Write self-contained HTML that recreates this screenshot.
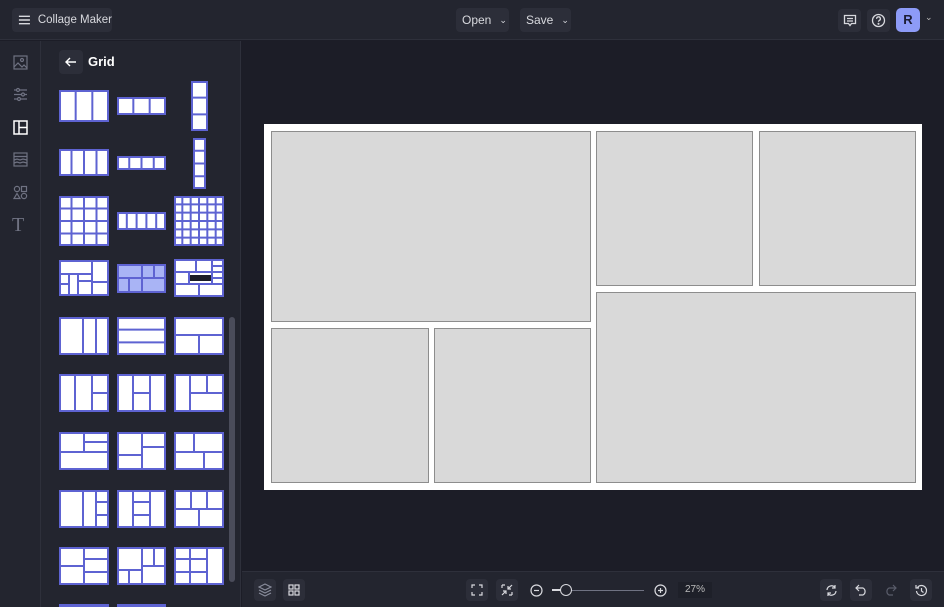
<!DOCTYPE html>
<html><head><meta charset="utf-8"><style>
*{margin:0;padding:0;box-sizing:border-box}
html,body{width:944px;height:607px;overflow:hidden}
body{background:#1c1d27;font-family:"Liberation Sans",sans-serif;position:relative}
.top{position:absolute;left:0;top:0;width:944px;height:40px;background:#23252f;border-bottom:1px solid #2e303b}
.btn{position:absolute;background:#2c2e39;border-radius:4px;color:#d8d9de;font-size:12px;display:flex;align-items:center;white-space:nowrap}
.rail{position:absolute;left:0;top:41px;width:41px;height:566px;background:#23252f;border-right:1px solid #2e303b}
.panel{position:absolute;left:41px;top:41px;width:200px;height:566px;background:#23252f;border-right:1px solid #2e303b;overflow:hidden}
.bottom{position:absolute;left:242px;top:571px;width:702px;height:36px;background:#23252f;border-top:1px solid #2e303b}
.t{position:absolute}
.t svg{display:block}
.ib{position:absolute;width:22px;height:22px;background:#2c2e39;border-radius:4px;display:flex;align-items:center;justify-content:center}
.cell{position:absolute;background:#d9d9d9;border:1px solid #8d8d8d}
#thumbs{position:absolute;left:0;top:0;width:944px;height:607px;overflow:hidden}
</style></head><body>
<div class="top">
 <div class="btn" style="left:12px;top:8px;width:100px;height:24px;padding-left:6px">
  <svg width="14" height="12" viewBox="0 0 14 12"><path d="M1 2h12M1 6h12M1 10h12" stroke="#d8d9de" stroke-width="1.5"/></svg>
  <span style="margin-left:7px;font-size:11.5px">Collage Maker</span></div>
 <div class="btn" style="left:456px;top:8px;width:53px;height:24px;padding-left:6px">Open <span style="margin-left:8px;font-size:9px">&#8964;</span></div>
 <div class="btn" style="left:520px;top:8px;width:51px;height:24px;padding-left:6px">Save <span style="margin-left:8px;font-size:9px">&#8964;</span></div>
 <div class="ib" style="left:838px;top:9px;width:23px;height:23px"><svg width="14" height="14" viewBox="0 0 14 14" fill="none" stroke="#d8d9de" stroke-width="1.3"><path d="M1.5 1.5h11v8h-4l-1.5 2-1.5-2h-4z"/><path d="M4 4.5h6M4 7h6"/></svg></div>
 <div class="ib" style="left:867px;top:9px;width:23px;height:23px"><svg width="15" height="15" viewBox="0 0 15 15" fill="none" stroke="#d8d9de" stroke-width="1.3"><circle cx="7.5" cy="7.5" r="6"/><path d="M5.6 5.8a1.9 1.9 0 1 1 2.6 1.7c-.5.3-.7.6-.7 1.2"/><circle cx="7.5" cy="10.8" r=".4" fill="#d8d9de"/></svg></div>
 <div style="position:absolute;left:896px;top:8px;width:24px;height:24px;background:#8d9bf7;border-radius:5px;color:#1c1d35;font-weight:bold;font-size:13px;text-align:center;line-height:24px">R</div>
 <div style="position:absolute;left:925px;top:12px;color:#bbb;font-size:9px">&#8964;</div>
</div>
<div class="rail">
 <svg style="position:absolute;left:13px;top:14px" width="15" height="15" viewBox="0 0 15 15" fill="none" stroke="#6f7282" stroke-width="1.2"><rect x="1" y="1" width="13" height="13"/><circle cx="9" cy="5" r="1.5"/><path d="M1 12l4-4 4 4 2-2 3 3"/></svg>
 <svg style="position:absolute;left:13px;top:46px" width="15" height="15" viewBox="0 0 15 15" fill="none" stroke="#6f7282" stroke-width="1.2"><path d="M1 3h13M1 7.5h13M1 12h13"/><circle cx="5" cy="3" r="1.5" fill="#23252f"/><circle cx="10" cy="7.5" r="1.5" fill="#23252f"/><circle cx="6" cy="12" r="1.5" fill="#23252f"/></svg>
 <svg style="position:absolute;left:13px;top:79px" width="15" height="15" viewBox="0 0 15 15" fill="none" stroke="#ffffff" stroke-width="1.5"><rect x="1" y="1" width="13" height="13"/><path d="M6 1v13M6 7.5h8"/></svg>
 <svg style="position:absolute;left:13px;top:111px" width="15" height="15" viewBox="0 0 15 15" fill="none" stroke="#6f7282" stroke-width="1.2"><rect x="1" y="1" width="13" height="13"/><path d="M1 4.5h13M1 8l3-1 3 1 3-1 4 1M1 11l3-1 3 1 3-1 4 1"/></svg>
 <svg style="position:absolute;left:13px;top:144px" width="15" height="15" viewBox="0 0 15 15" fill="none" stroke="#6f7282" stroke-width="1.2"><circle cx="4" cy="4" r="2.6"/><rect x="8.5" y="1.5" width="5" height="5"/><path d="M4 8.5l3 5H1z"/><circle cx="11" cy="11" r="2.6"/></svg>
 <div style="position:absolute;left:12px;top:173px;color:#6f7282;font-family:'Liberation Serif',serif;font-size:20px">T</div>
</div>
<div class="panel">
 <div class="ib" style="left:18px;top:9px;width:24px;height:24px"><svg width="12" height="10" viewBox="0 0 12 10" fill="none" stroke="#fff" stroke-width="1.4"><path d="M11 5H1.5M5 1L1 5l4 4"/></svg></div>
 <div style="position:absolute;left:47px;top:13px;color:#fff;font-weight:bold;font-size:13px">Grid</div>
 <div style="position:absolute;left:188px;top:276px;width:6px;height:265px;background:#4a4c5a;border-radius:3px"></div>
</div>
<div id="thumbs"></div>
<div class="bottom">
 <div class="ib" style="left:12px;top:7px"><svg width="14" height="14" viewBox="0 0 14 14" fill="none" stroke="#8a8d9c" stroke-width="1.1"><path d="M7 1l6 3-6 3-6-3z M1 7l6 3 6-3M1 10l6 3 6-3"/></svg></div>
 <div class="ib" style="left:41px;top:7px"><svg width="12" height="12" viewBox="0 0 12 12" fill="none" stroke="#d8d9de" stroke-width="1.2"><rect x="1" y="1" width="4" height="4"/><rect x="7" y="1" width="4" height="4"/><rect x="1" y="7" width="4" height="4"/><rect x="7" y="7" width="4" height="4"/></svg></div>
 <div class="ib" style="left:224px;top:7px"><svg width="12" height="12" viewBox="0 0 12 12" fill="none" stroke="#d8d9de" stroke-width="1.2"><path d="M1 4V1h3M8 1h3v3M11 8v3H8M4 11H1V8"/></svg></div>
 <div class="ib" style="left:254px;top:7px"><svg width="12" height="12" viewBox="0 0 12 12" fill="none" stroke="#d8d9de" stroke-width="1.2"><path d="M1 1h3M1 1v3M11 1L7 5M7 2v3h3M11 11H8M11 11V8M1 11l4-4M5 10V7H2"/></svg></div>
 <svg style="position:absolute;left:288px;top:12px" width="13" height="13" viewBox="0 0 13 13" fill="none" stroke="#d8d9de" stroke-width="1.2"><circle cx="6.5" cy="6.5" r="5.5"/><path d="M4 6.5h5"/></svg>
 <div style="position:absolute;left:310px;top:18px;width:92px;height:1px;background:#6f7282"></div>
 <div style="position:absolute;left:310px;top:17px;width:15px;height:2px;background:#d8d9de"></div>
 <div style="position:absolute;left:318px;top:12px;width:12px;height:12px;border:1.5px solid #d8d9de;border-radius:50%;background:#23252f"></div>
 <svg style="position:absolute;left:412px;top:12px" width="13" height="13" viewBox="0 0 13 13" fill="none" stroke="#d8d9de" stroke-width="1.2"><circle cx="6.5" cy="6.5" r="5.5"/><path d="M4 6.5h5M6.5 4v5"/></svg>
 <div style="position:absolute;left:436px;top:10px;width:34px;height:16px;background:#1e2029;color:#bbb;font-size:10px;text-align:center;line-height:16px">27%</div>
 <div class="ib" style="left:578px;top:7px"><svg width="13" height="13" viewBox="0 0 13 13" fill="none" stroke="#d8d9de" stroke-width="1.2"><path d="M2 6a4.5 4.5 0 0 1 8-2.5M11 7a4.5 4.5 0 0 1-8 2.5M10 1v3H7M3 12V9h3"/></svg></div>
 <div class="ib" style="left:608px;top:7px"><svg width="13" height="12" viewBox="0 0 13 12" fill="none" stroke="#d8d9de" stroke-width="1.2"><path d="M4 1L1 4l3 3M1 4h7a4 4 0 0 1 0 7H4"/></svg></div>
 <svg style="position:absolute;left:642px;top:12px" width="13" height="12" viewBox="0 0 13 12" fill="none" stroke="#5a5d6b" stroke-width="1.2"><path d="M9 1l3 3-3 3M12 4H5a4 4 0 0 0 0 7h4"/></svg>
 <div class="ib" style="left:668px;top:7px"><svg width="13" height="13" viewBox="0 0 13 13" fill="none" stroke="#d8d9de" stroke-width="1.2"><path d="M2.5 3.5A5 5 0 1 1 1.5 7M1 1v3h3M6.5 4v3l2 1.5"/></svg></div>
</div>
<div style="position:absolute;left:264px;top:124px;width:658px;height:366px;background:#fff"></div>
<div class="cell" style="left:271px;top:131px;width:320px;height:191px"></div>
<div class="cell" style="left:596px;top:131px;width:157px;height:155px"></div>
<div class="cell" style="left:759px;top:131px;width:157px;height:155px"></div>
<div class="cell" style="left:271px;top:328px;width:158px;height:155px"></div>
<div class="cell" style="left:434px;top:328px;width:157px;height:155px"></div>
<div class="cell" style="left:596px;top:292px;width:320px;height:191px"></div>
<script>
var S='#5e63d2';
function T(x,y,w,h,lines,fill,extra){
 var s='<div class="t" style="left:'+x+'px;top:'+y+'px"><svg width="'+w+'" height="'+h+'" viewBox="0 0 '+w+' '+h+'"><rect x="1" y="1" width="'+(w-2)+'" height="'+(h-2)+'" fill="'+(fill||'#fff')+'" stroke="'+S+'" stroke-width="2"/>'+(extra||'');
 lines.forEach(function(l){s+='<line x1="'+l[0]+'" y1="'+l[1]+'" x2="'+l[2]+'" y2="'+l[3]+'" stroke="'+S+'" stroke-width="2"/>';});
 return s+'</svg></div>';
}
function V(w,h,n){var a=[];for(var i=1;i<n;i++)a.push([w*i/n,0,w*i/n,h]);return a}
function H(w,h,n){var a=[];for(var i=1;i<n;i++)a.push([0,h*i/n,w,h*i/n]);return a}
var o='';
o+=T(59,90,50,32,V(50,32,3))+T(117,97,49,18,V(49,18,3))+T(191,81,17,50,H(17,50,3));
o+=T(59,149,50,27,V(50,27,4))+T(117,156,49,14,V(49,14,4))+T(193,138,13,51,H(13,51,4));
o+=T(59,196,50,50,V(50,50,4).concat(H(50,50,4)))+T(117,212,49,18,V(49,18,5))+T(174,196,50,50,V(50,50,6).concat(H(50,50,6)));
o+=T(59,260,50,36,[[33,0,33,36],[33,22,50,22],[0,14,33,14],[0,24,10,24],[10,14,10,36],[19,14,19,36],[19,21,33,21]]);
o+=T(117,264,49,29,[[25,0,25,29],[0,14,49,14],[37,0,37,14],[12,14,12,29]],'#a9b4f5');
o+=T(174,259,50,38,[[0,13,50,13],[22,0,22,13],[38,0,38,25],[38,7,50,7],[38,19,50,19],[0,25,50,25],[15,13,15,25],[25,25,25,38]],'#fff','<rect x="15" y="16" width="23" height="6" fill="#1c1d27"/>');
o+=T(59,317,50,38,[[24,0,24,38],[37,0,37,38]])+T(117,317,49,38,H(49,38,3))+T(174,317,50,38,[[0,18,50,18],[25,18,25,38]]);
o+=T(59,374,50,38,[[16,0,16,38],[33,0,33,38],[33,19,50,19]])+T(117,374,49,38,[[16,0,16,38],[33,0,33,38],[16,19,33,19]])+T(174,374,50,38,[[16,0,16,38],[16,19,50,19],[33,0,33,19]]);
o+=T(59,432,50,38,[[0,20,50,20],[25,0,25,20],[25,10,50,10]])+T(117,432,49,38,[[25,0,25,38],[0,23,25,23],[25,15,49,15]])+T(174,432,50,38,[[0,20,50,20],[20,0,20,20],[30,20,30,38]]);
o+=T(59,490,50,38,[[24,0,24,38],[37,0,37,38],[37,12,50,12],[37,25,50,25]])+T(117,490,49,38,[[16,0,16,38],[33,0,33,38],[16,12,33,12],[16,25,33,25]])+T(174,490,50,38,[[0,19,50,19],[17,0,17,19],[33,0,33,19],[25,19,25,38]]);
o+=T(59,547,50,38,[[25,0,25,38],[0,19,25,19],[25,12,50,12],[25,25,50,25]])+T(117,547,49,38,[[25,0,25,38],[0,23,25,23],[12,23,12,38],[25,19,49,19],[37,0,37,19]])+T(174,547,50,38,[[33,0,33,38],[16,0,16,38],[0,12,33,12],[0,25,33,25]]);
o+=T(59,604,50,3,[[25,0,25,3]])+T(117,604,49,3,[[25,0,25,3]]);
document.getElementById('thumbs').innerHTML=o;
</script>
</body></html>
